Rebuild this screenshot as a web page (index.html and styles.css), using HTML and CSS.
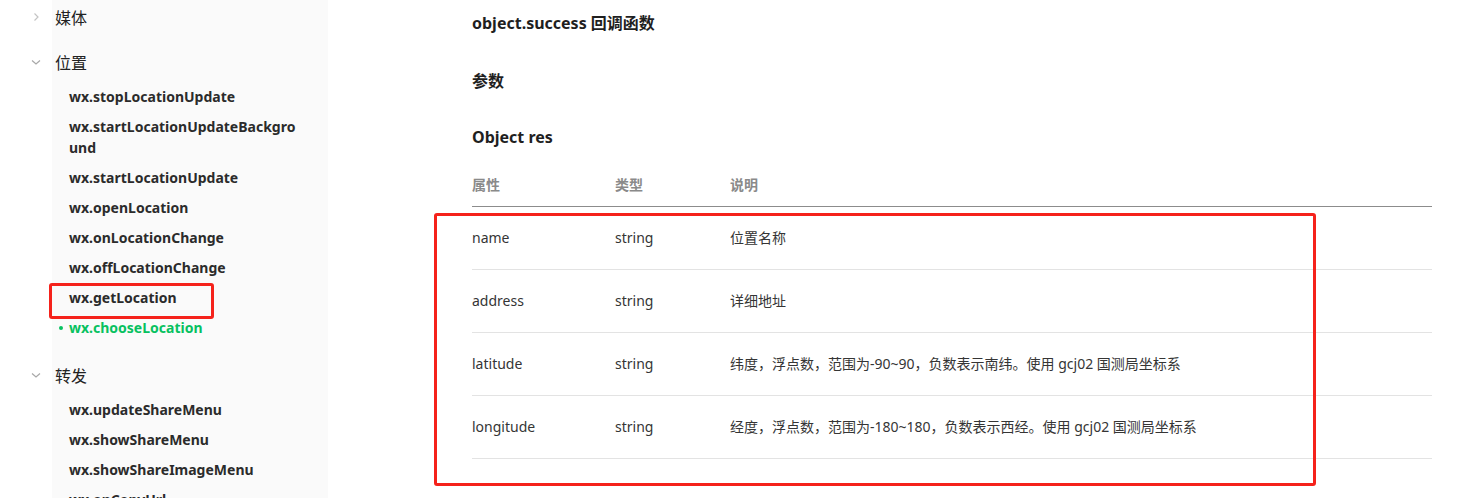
FILE: index.html
```html
<!DOCTYPE html>
<html lang="zh-CN">
<head>
<meta charset="utf-8">
<title>wx.chooseLocation</title>
<link rel="stylesheet" href="styles.css">
</head>
<body>
<div class="page">
  <aside class="sidebar">
    <div class="group">
      <div class="group-title">
        <svg class="chev" viewBox="0 0 12 12" width="12" height="12"><path d="M4.5 2.5 L8 6 L4.5 9.5" fill="none" stroke="#c4c4c4" stroke-width="1.2"/></svg>
        <span>媒体</span>
      </div>
    </div>
    <div class="group">
      <div class="group-title">
        <svg class="chev" viewBox="0 0 12 12" width="12" height="12"><path d="M2 4.5 L6 8 L10 4.5" fill="none" stroke="#a8a8a8" stroke-width="1.2"/></svg>
        <span>位置</span>
      </div>
      <ul class="items">
        <li class="item">wx.stopLocationUpdate</li>
        <li class="item">wx.startLocationUpdateBackground</li>
        <li class="item">wx.startLocationUpdate</li>
        <li class="item">wx.openLocation</li>
        <li class="item">wx.onLocationChange</li>
        <li class="item">wx.offLocationChange</li>
        <li class="item marked">wx.getLocation</li>
        <li class="item active">wx.chooseLocation</li>
      </ul>
    </div>
    <div class="group">
      <div class="group-title">
        <svg class="chev" viewBox="0 0 12 12" width="12" height="12"><path d="M2 4.5 L6 8 L10 4.5" fill="none" stroke="#a8a8a8" stroke-width="1.2"/></svg>
        <span>转发</span>
      </div>
      <ul class="items">
        <li class="item">wx.updateShareMenu</li>
        <li class="item">wx.showShareMenu</li>
        <li class="item">wx.showShareImageMenu</li>
        <li class="item">wx.onCopyUrl</li>
      </ul>
    </div>
  </aside>
  <main class="content">
    <h4 class="title t1">object.success 回调函数</h4>
    <h4 class="title t2">参数</h4>
    <h4 class="title t3">Object res</h4>
    <div class="table-wrap">
      <table class="props">
        <thead>
          <tr><th class="c1">属性</th><th class="c2">类型</th><th>说明</th></tr>
        </thead>
        <tbody>
          <tr><td>name</td><td>string</td><td>位置名称</td></tr>
          <tr><td>address</td><td>string</td><td>详细地址</td></tr>
          <tr><td>latitude</td><td>string</td><td>纬度，浮点数，范围为-90~90，负数表示南纬。使用 gcj02 国测局坐标系</td></tr>
          <tr><td>longitude</td><td>string</td><td>经度，浮点数，范围为-180~180，负数表示西经。使用 gcj02 国测局坐标系</td></tr>
        </tbody>
      </table>
      <div class="highlight"></div>
    </div>
  </main>
</div>
</body>
</html>
```

FILE: styles.css
```css
* { box-sizing: border-box; }

html, body {
  margin: 0;
  padding: 0;
  background: #fff;
  height: 498px;
  overflow: hidden;
}

body {
  font-family: "Noto Sans", "Noto Sans CJK SC", sans-serif;
  color: #222;
}

.page {
  display: flex;
  align-items: flex-start;
  height: 498px;
}

.sidebar {
  width: 328px;
  flex: none;
  height: 498px;
  background: linear-gradient(to right, #fff 52px, #fafafa 52px);
}

.group {
  margin-bottom: 11px;
}

.group-title {
  display: flex;
  align-items: center;
  height: 34px;
  font-size: 16px;
  color: #222;
}

.chev {
  margin-left: 30px;
  margin-right: 13px;
  flex: none;
}

.items {
  list-style: none;
  margin: 0;
  padding: 3px 32px 4px 69px;
}

.item {
  position: relative;
  font-size: 14px;
  font-weight: 700;
  line-height: 21px;
  padding: 4px 0 5px;
  color: #2b2b2b;
  word-break: break-all;
}

.item.active {
  color: #07c160;
}

.item.active::before {
  content: "";
  position: absolute;
  left: -10px;
  top: 13px;
  width: 4px;
  height: 4px;
  border-radius: 50%;
  background: #07c160;
}

.item.marked::after {
  content: "";
  position: absolute;
  left: -20px;
  top: 0;
  width: 159px;
  height: 30px;
  border: 3px solid #f5221b;
  border-radius: 3px;
}

.content {
  flex: 1;
  padding: 11px 52px 0 144px;
}

.title {
  margin: 0;
  font-size: 16px;
  font-weight: 700;
  line-height: 24px;
  color: #1f1f1f;
}

.t1 { margin-bottom: 34px; }
.t2 { margin-bottom: 32px; }

.table-wrap {
  position: relative;
  margin-top: 20px;
}

.props {
  width: 960px;
  border-collapse: collapse;
  font-size: 14px;
}

.props th {
  text-align: left;
  font-weight: 700;
  color: #8a8a8a;
  line-height: 20px;
  padding: 6px 0 11px;
  border-bottom: 1px solid #8c8c8c;
}

.props .c1 { width: 143px; }
.props .c2 { width: 115px; }

.props td {
  line-height: 20px;
  padding: 21px 0;
  color: #353535;
  border-bottom: 1px solid #e3e3e3;
}

.highlight {
  position: absolute;
  left: -38px;
  top: 44px;
  width: 882px;
  height: 273px;
  border: 3px solid #f5221b;
  border-radius: 3px;
  pointer-events: none;
}
```
